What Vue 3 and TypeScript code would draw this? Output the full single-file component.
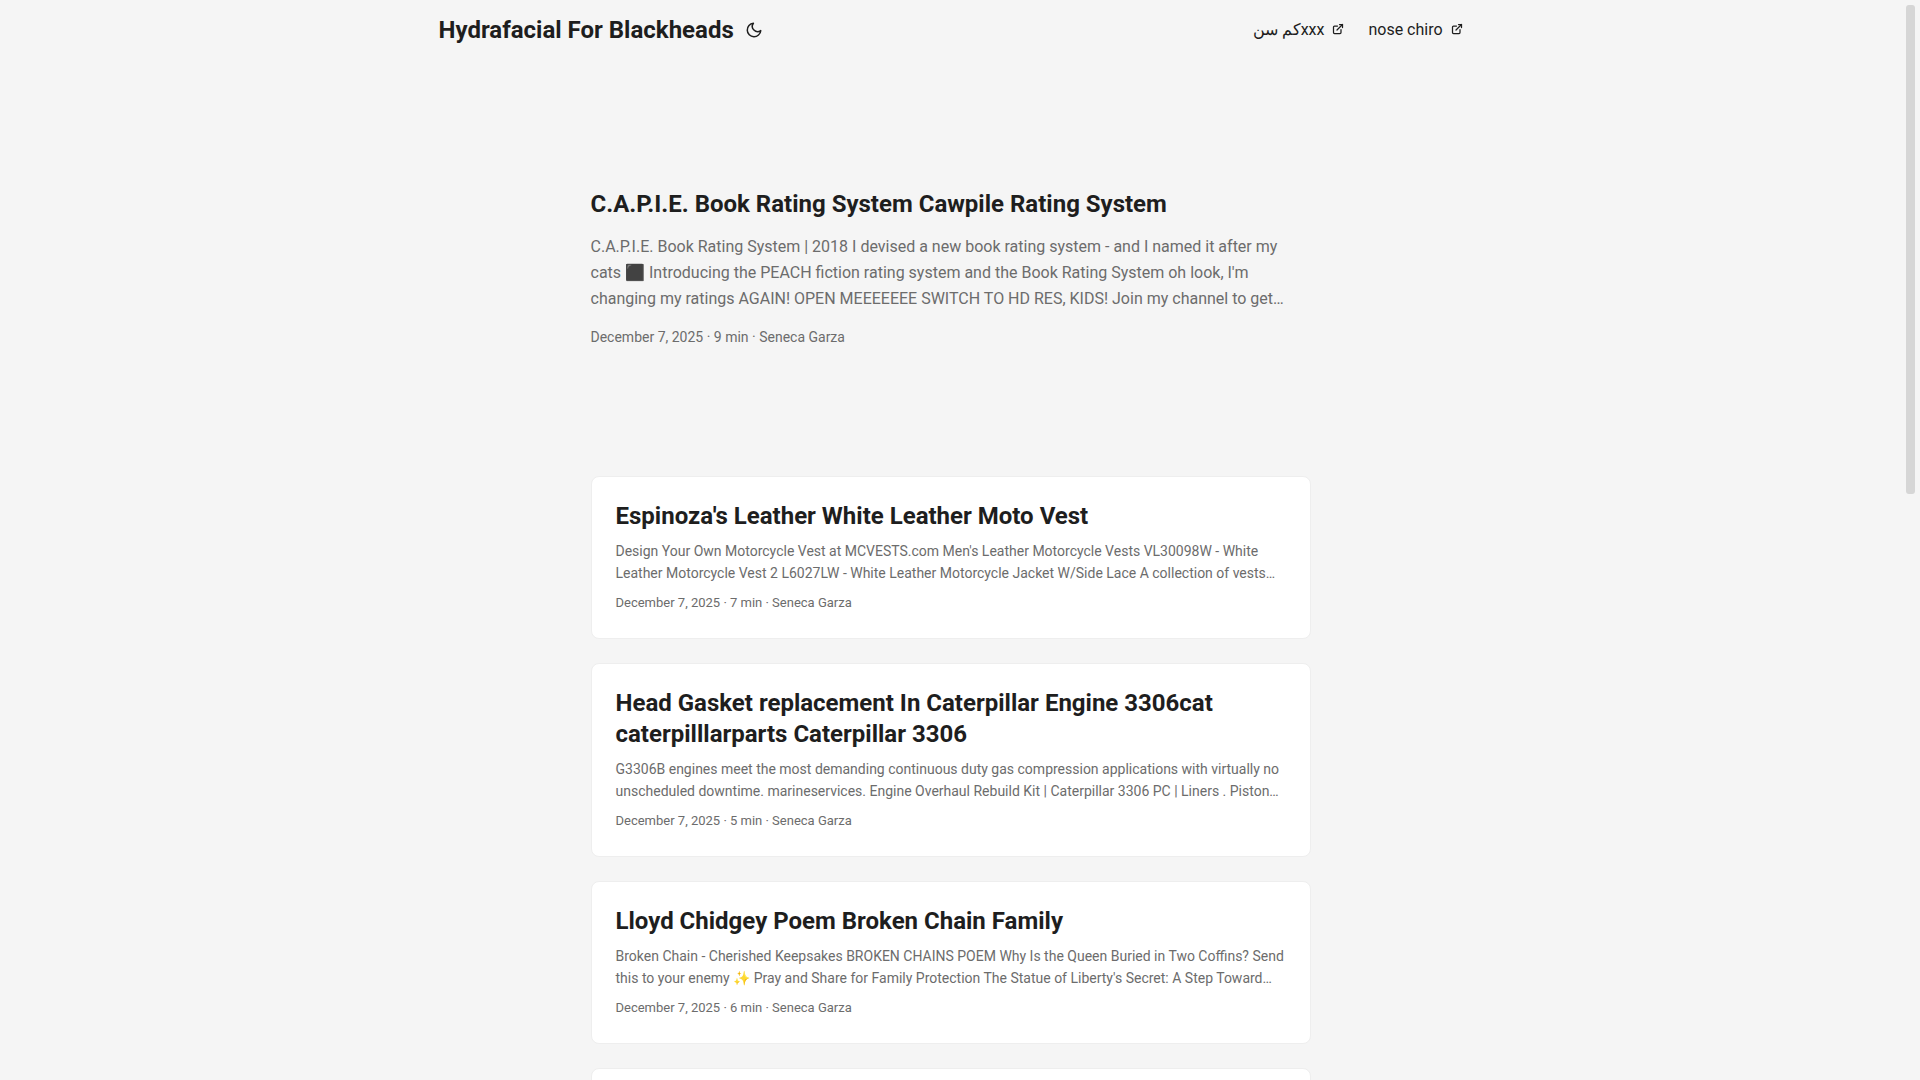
<script setup lang="ts">
interface Post {
  title: string
  excerpt: string
  date: string
  minutes: number
  author: string
}

const menu: string[] = ['كم سنxxx', 'nose chiro']

const featured: Post = {
  title: 'C.A.P.I.E. Book Rating System Cawpile Rating System',
  excerpt:
    "C.A.P.I.E. Book Rating System | 2018 I devised a new book rating system - and I named it after my cats ⬛ Introducing the PEACH fiction rating system and the Book Rating System oh look, I'm changing my ratings AGAIN! OPEN MEEEEEEE SWITCH TO HD RES, KIDS! Join my channel to get…",
  date: 'December 7, 2025',
  minutes: 9,
  author: 'Seneca Garza',
}

const posts: Post[] = [
  {
    title: "Espinoza's Leather White Leather Moto Vest",
    excerpt:
      "Design Your Own Motorcycle Vest at MCVESTS.com Men's Leather Motorcycle Vests VL30098W - White Leather Motorcycle Vest 2 L6027LW - White Leather Motorcycle Jacket W/Side Lace A collection of vests…",
    date: 'December 7, 2025',
    minutes: 7,
    author: 'Seneca Garza',
  },
  {
    title: 'Head Gasket replacement In Caterpillar Engine 3306cat caterpilllarparts Caterpillar 3306',
    excerpt:
      'G3306B engines meet the most demanding continuous duty gas compression applications with virtually no unscheduled downtime. marineservices. Engine Overhaul Rebuild Kit | Caterpillar 3306 PC | Liners . Piston…',
    date: 'December 7, 2025',
    minutes: 5,
    author: 'Seneca Garza',
  },
  {
    title: 'Lloyd Chidgey Poem Broken Chain Family',
    excerpt:
      "Broken Chain - Cherished Keepsakes BROKEN CHAINS POEM Why Is the Queen Buried in Two Coffins? Send this to your enemy ✨ Pray and Share for Family Protection The Statue of Liberty's Secret: A Step Toward…",
    date: 'December 7, 2025',
    minutes: 6,
    author: 'Seneca Garza',
  },
]
</script>

<template>
  <div class="viewport">
    <div class="page">
      <header>
        <nav class="nav">
          <div class="logo">
            <a href="#">Hydrafacial For Blackheads</a>
            <button class="theme-toggle" type="button" aria-label="Toggle theme">
              <svg width="18" height="18" viewBox="0 0 24 24" fill="none" stroke="currentColor" stroke-width="2" stroke-linecap="round" stroke-linejoin="round">
                <path d="M21 12.79A9 9 0 1 1 11.21 3 7 7 0 0 0 21 12.79z" />
              </svg>
            </button>
          </div>
          <ul class="menu">
            <li v-for="item in menu" :key="item">
              <a href="#">
                <span>{{ item }}</span>&nbsp;
                <svg width="12" height="12" viewBox="0 0 24 24" fill="none" stroke="currentColor" stroke-width="2.5" stroke-linecap="round" stroke-linejoin="round" shape-rendering="geometricPrecision">
                  <path d="M18 13v6a2 2 0 01-2 2H5a2 2 0 01-2-2V8a2 2 0 012-2h6" />
                  <path d="M15 3h6v6" />
                  <path d="M10 14L21 3" />
                </svg>
              </a>
            </li>
          </ul>
        </nav>
      </header>

      <main class="main">
        <article class="featured">
          <h2>{{ featured.title }}</h2>
          <p>{{ featured.excerpt }}</p>
          <footer>{{ featured.date }}&nbsp;·&nbsp;{{ featured.minutes }} min&nbsp;·&nbsp;{{ featured.author }}</footer>
        </article>
        <article v-for="post in posts" :key="post.title" class="card">
          <h2>{{ post.title }}</h2>
          <p>{{ post.excerpt }}</p>
          <footer>{{ post.date }}&nbsp;·&nbsp;{{ post.minutes }} min&nbsp;·&nbsp;{{ post.author }}</footer>
        </article>
        <article class="card"></article>
      </main>
    </div>
    <div class="scroll-rail" aria-hidden="true"><div class="scroll-thumb"></div></div>
  </div>
</template>

<style>
body {
  margin: 0;
  background: #f5f5f5;
}
</style>

<style scoped>
.viewport {
  --gap: 24px;
  --primary: #1e1e1e;
  --secondary: #6c6c6c;
  display: flex;
  height: 100vh;
  overflow: hidden;
  background: #f5f5f5;
  color: var(--primary);
  font-family: Roboto, sans-serif;
  font-size: 16px;
}

.page {
  flex: 1;
  min-width: 0;
}

a {
  color: inherit;
  text-decoration: none;
}

.nav {
  display: flex;
  justify-content: space-between;
  max-width: 1024px;
  margin: 0 auto;
  padding: 0 var(--gap);
  line-height: 60px;
}

.logo {
  display: flex;
  align-items: center;
  font-size: 24px;
  font-weight: 700;
}

.theme-toggle {
  display: flex;
  margin: 0 11px;
  padding: 0;
  border: 0;
  background: none;
  color: inherit;
}

.menu {
  display: flex;
  gap: var(--gap);
  margin: 0;
  padding: 0;
  list-style: none;
  white-space: nowrap;
}

.main {
  max-width: 720px;
  margin: 0 auto;
  padding: var(--gap);
}

h2 {
  margin: 0;
  font-size: 24px;
  font-weight: 700;
  line-height: 31px;
}

p {
  margin: 8px 0;
  color: var(--secondary);
  font-size: 14px;
  line-height: 22px;
}

footer {
  color: var(--secondary);
  font-size: 13px;
  line-height: 22px;
}

.featured {
  display: flex;
  flex-direction: column;
  justify-content: center;
  min-height: 320px;
  margin: var(--gap) 0 48px;
}

.featured p {
  margin: 14px 0;
  font-size: 16px;
  line-height: 26px;
}

.featured footer {
  font-size: 14px;
}

.card {
  margin-bottom: var(--gap);
  padding: var(--gap);
  border: 1px solid #eeeeee;
  border-radius: 8px;
  background: #ffffff;
}

.scroll-rail {
  box-sizing: border-box;
  width: 19px;
  padding: 5px;
}

.scroll-thumb {
  height: 45.7%;
  border-radius: 3px;
  background: #d6d6d6;
}
</style>
